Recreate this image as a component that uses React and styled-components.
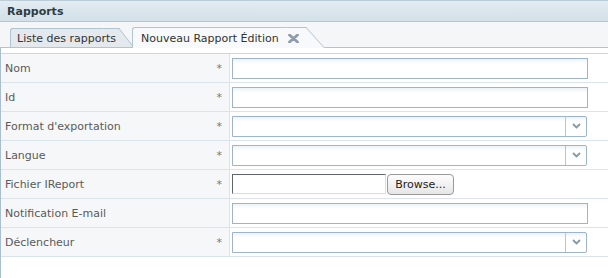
import React from "react";
import styled, { createGlobalStyle } from "styled-components";

const GlobalStyle = createGlobalStyle`
  body {
    margin: 0;
    background: #fff;
    font-family: "DejaVu Sans", Verdana, sans-serif;
  }
`;

const Page = styled.div`
  width: 608px;
  height: 278px;
  overflow: hidden;
`;

const Header = styled.div`
  height: 20px;
  display: flex;
  align-items: center;
  padding-left: 7px;
  border-top: 1px solid #bccdd8;
  border-bottom: 1px solid #b3c6d2;
  background: linear-gradient(#e3ecf1, #d2e0e8);
  font-size: 11px;
  font-weight: bold;
  color: #2f3b45;
`;

const TabStrip = styled.div`
  height: 25px;
  display: flex;
  align-items: flex-end;
  padding-left: 10px;
  background: #f4f6f8;
  border-bottom: 1px solid #b1c4d1;
`;

const Tab = styled.div`
  position: relative;
  display: flex;
  align-items: center;
  gap: 9px;
  box-sizing: border-box;
  height: ${(p) => (p.$active ? "21px" : "19px")};
  margin-bottom: ${(p) => (p.$active ? "-1px" : "0")};
  margin-right: ${(p) => (p.$active ? "0" : "14px")};
  padding: ${(p) => (p.$active ? "0 6px 0 8px" : "0 2px 0 6px")};
  z-index: ${(p) => (p.$active ? 2 : 1)};
  border-top: 1px solid #b1c4d1;
  border-left: 1px solid #b1c4d1;
  border-top-left-radius: 3px;
  background: ${(p) => (p.$active ? "#f7f9fa" : "#e3e9ed")};
  font-size: 11px;
  color: #333;
  white-space: nowrap;

  &::after {
    content: "";
    position: absolute;
    top: -1px;
    bottom: 0;
    left: 100%;
    width: ${(p) => (p.$active ? "19px" : "15px")};
    background: inherit;
    border-top: 1px solid #b1c4d1;
    border-right: 1px solid #b1c4d1;
    transform: skewX(${(p) => (p.$active ? "42deg" : "38deg")});
    transform-origin: 0 100%;
    z-index: -1;
  }
`;

const Panel = styled.div`
  height: 230px;
  padding-top: 5px;
  border-left: 1px solid #a9bfcf;
`;

const Form = styled.div`
  border-top: 1px solid #c9d9e3;
`;

const Row = styled.div`
  display: grid;
  grid-template-columns: 229px 1fr;
  height: 28px;
  border-bottom: 1px solid #d9e5eb;
`;

const LabelCell = styled.div`
  display: flex;
  align-items: center;
  justify-content: space-between;
  padding: 0 7px 0 4px;
  background: #f5f7f9;
  border-right: 1px solid #d9e5eb;
  font-size: 11px;
  color: #5a5a5a;
`;

const Star = styled.span`
  color: #777;
  font-size: 11px;
`;

const FieldCell = styled.div`
  display: flex;
  align-items: center;
  gap: 1px;
  padding-left: 2px;
`;

const TextInput = styled.div`
  box-sizing: border-box;
  width: 356px;
  height: 21px;
  border: 1px solid #9eb5c9;
  background: linear-gradient(#eef3f6, #fff 5px);
`;

const Select = styled.div`
  box-sizing: border-box;
  width: 355px;
  height: 21px;
  display: flex;
  justify-content: flex-end;
  border: 1px solid #9eb5c9;
  border-radius: 0 2px 2px 0;
  background: linear-gradient(#eef3f6, #fff 5px);
`;

const SelectButton = styled.div`
  width: 20px;
  display: flex;
  align-items: center;
  justify-content: center;
  border-left: 1px solid #b5c6d4;
`;

const FileBox = styled.div`
  box-sizing: border-box;
  width: 154px;
  height: 20px;
  border: 1px solid #d6dde3;
  border-top-color: #5c6670;
  border-left-color: #5c6670;
  background: #fff;
`;

const BrowseButton = styled.div`
  box-sizing: border-box;
  width: 67px;
  height: 21px;
  display: flex;
  align-items: center;
  justify-content: center;
  border: 1px solid #9a9a9a;
  border-radius: 4px;
  background: linear-gradient(#fdfdfd, #e6e6e6);
  font-size: 11px;
  color: #222;
`;

const CloseIcon = () => (
  <svg width="11" height="9" viewBox="0 0 11 9">
    <path d="M1.5 1 L9.5 8 M9.5 1 L1.5 8" stroke="#8d9dab" strokeWidth="2.8" strokeLinecap="round" />
  </svg>
);

const Chevron = () => (
  <svg width="9" height="6" viewBox="0 0 9 6">
    <path d="M1 1 L4.5 4.5 L8 1" fill="none" stroke="#8898a6" strokeWidth="1.8" />
  </svg>
);

const fields = [
  { label: "Nom", required: true, type: "text" },
  { label: "Id", required: true, type: "text" },
  { label: "Format d'exportation", required: true, type: "select" },
  { label: "Langue", required: true, type: "select" },
  { label: "Fichier IReport", required: true, type: "file" },
  { label: "Notification E-mail", required: false, type: "text" },
  { label: "Déclencheur", required: true, type: "select" },
];

function Field({ type }) {
  if (type === "select")
    return (
      <Select>
        <SelectButton>
          <Chevron />
        </SelectButton>
      </Select>
    );
  if (type === "file")
    return (
      <>
        <FileBox />
        <BrowseButton>Browse...</BrowseButton>
      </>
    );
  return <TextInput />;
}

function App() {
  return (
    <Page>
      <GlobalStyle />
      <Header>Rapports</Header>
      <TabStrip>
        <Tab>Liste des rapports</Tab>
        <Tab $active>
          Nouveau Rapport Édition
          <CloseIcon />
        </Tab>
      </TabStrip>
      <Panel>
        <Form>
          {fields.map((f) => (
            <Row key={f.label}>
              <LabelCell>
                {f.label}
                {f.required && <Star>*</Star>}
              </LabelCell>
              <FieldCell>
                <Field type={f.type} />
              </FieldCell>
            </Row>
          ))}
        </Form>
      </Panel>
    </Page>
  );
}

export default App;
